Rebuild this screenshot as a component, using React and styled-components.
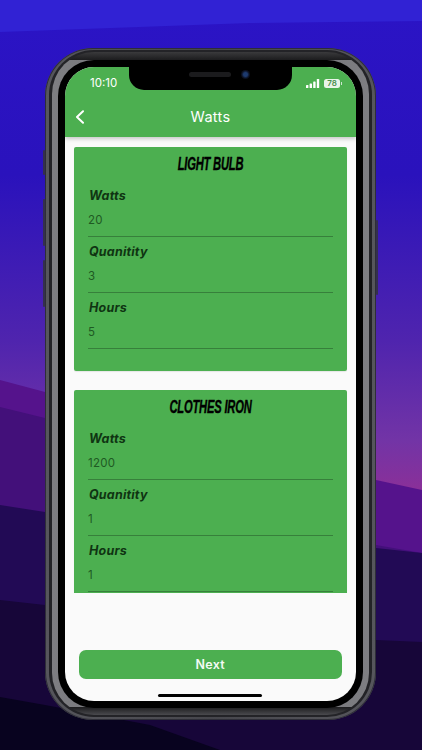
import React from "react";
import styled, { createGlobalStyle } from "styled-components";

const Global = createGlobalStyle`
  html, body { margin: 0; padding: 0; }
  body { font-family: Inter, "Liberation Sans", sans-serif; background: #140536; }
`;

const Page = styled.div`
  position: relative;
  width: 422px;
  height: 750px;
  overflow: hidden;
  padding-top: 48px;
  box-sizing: border-box;
`;

const Backdrop = styled.svg`
  position: absolute;
  inset: 0;
  width: 422px;
  height: 750px;
`;

const Shell = styled.div`
  position: relative;
  width: 331px;
  height: 672px;
  margin-left: 45px;
  box-sizing: border-box;
  padding: 2px 4px 3px;
  border-radius: 48px;
  background: linear-gradient(90deg, #56565c, #46464c 50%, #56565c);
  box-shadow: inset 0 0 0 1px #2e2e38;
`;

const DarkRing = styled.div`
  height: 100%;
  box-sizing: border-box;
  padding: 2px 3px;
  border-radius: 45px;
  background: #232327;
`;

const MetalRing = styled.div`
  height: 100%;
  box-sizing: border-box;
  padding: 8px 6px 7px;
  border-radius: 42px;
  background:
    linear-gradient(180deg, #3a3a3c 0, #1c1c1e 8px, transparent 8px, transparent calc(100% - 8px), #1c1c1e calc(100% - 8px), #4a4a4e 100%),
    linear-gradient(90deg, #7e7e82, #6a6a6e 50%, #7e7e82);
`;

const Bezel = styled.div`
  height: 100%;
  box-sizing: border-box;
  padding: 7px;
  border-radius: 36px;
  background: #000;
`;

const Screen = styled.div`
  position: relative;
  height: 100%;
  display: flex;
  flex-direction: column;
  overflow: hidden;
  border-radius: 29px;
  background: #fafafa;
`;

const SideKey = styled.div`
  position: absolute;
  top: ${(p) => p.$top}px;
  height: ${(p) => p.$h}px;
  width: 2px;
  ${(p) => (p.$right ? "right: -2px;" : "left: -2px;")}
  border-radius: 1px;
  background: #34304e;
`;

const Notch = styled.div`
  position: absolute;
  z-index: 2;
  top: 0;
  left: 64px;
  width: 163px;
  height: 23px;
  border-radius: 0 0 15px 15px;
  background: #000;
`;

const Speaker = styled.div`
  position: absolute;
  top: 5px;
  left: 60px;
  width: 42px;
  height: 5px;
  border-radius: 3px;
  background: #1b1b1d;
`;

const Camera = styled.div`
  position: absolute;
  top: 3px;
  left: 112px;
  width: 9px;
  height: 9px;
  border-radius: 50%;
  background: radial-gradient(circle, #1d3a6e 0 30%, #0b0f1e 60%);
`;

const Header = styled.header`
  position: relative;
  z-index: 1;
  flex: none;
  height: 70px;
  background: #4caf50;
  box-shadow: 0 2px 4px rgba(0, 0, 0, 0.2);
`;

const StatusBar = styled.div`
  height: 23px;
  display: flex;
  align-items: flex-end;
  justify-content: space-between;
  padding: 0 16px 0 25px;
  color: #fff;
`;

const Clock = styled.span`
  font-size: 11.5px;
  line-height: 15px;
  margin-bottom: -1px;
`;

const StatusIcons = styled.div`
  display: flex;
  align-items: center;
  gap: 4px;
  height: 11px;
  margin-bottom: 1px;
`;

const Battery = styled.span`
  position: relative;
  width: 16px;
  height: 9px;
  border-radius: 2.5px;
  background: #e9f4ea;
  color: #4a8f4e;
  font-size: 8px;
  font-weight: 600;
  line-height: 9px;
  text-align: center;
  &::after {
    content: "";
    position: absolute;
    right: -2px;
    top: 3px;
    width: 1px;
    height: 3px;
    background: #cfe6d0;
  }
`;

const NavBar = styled.div`
  height: 47px;
  box-sizing: border-box;
  padding-top: 7px;
  display: flex;
  align-items: center;
  justify-content: center;
  position: relative;
`;

const BackIcon = styled.svg`
  position: absolute;
  left: 10px;
  top: 20px;
`;

const Title = styled.h1`
  margin: 0;
  color: #fff;
  font-size: 14.5px;
  font-weight: 400;
  line-height: 20px;
  letter-spacing: 0.3px;
`;

const List = styled.div`
  flex: none;
  height: 456px;
  overflow: hidden;
  box-sizing: border-box;
  padding: 10px 9px 0;
  display: flex;
  flex-direction: column;
  gap: 19px;
`;

const Card = styled.section`
  flex: none;
  box-sizing: border-box;
  padding: 0 14px 22px;
  border-radius: 2px;
  background: #4caf50;
  box-shadow: 0 1px 1px rgba(0, 0, 0, 0.08);
`;

const CardTitle = styled.h2`
  margin: 0;
  height: 34px;
  display: flex;
  align-items: center;
  justify-content: center;
  color: #000;
  font-family: "Liberation Sans", sans-serif;
  font-size: 18px;
  font-style: italic;
  font-weight: 700;
  text-transform: uppercase;
  transform: scaleX(0.62);
  -webkit-text-stroke: 0.4px #000;
  white-space: nowrap;
  letter-spacing: -0.3px;
`;

const Field = styled.div`
  height: 56px;
  box-sizing: border-box;
  padding-top: 7px;
  border-bottom: 1px solid #37803b;
`;

const Label = styled.div`
  margin-left: 1px;
  color: #0f3412;
  font-size: 12.5px;
  font-style: italic;
  font-weight: 700;
  line-height: 16px;
  letter-spacing: 0.2px;
`;

const Value = styled.div`
  margin-top: 9px;
  color: #1f5a23;
  font-size: 11.5px;
  line-height: 14px;
  letter-spacing: 0.3px;
`;

const Footer = styled.div`
  flex: 1;
  position: relative;
  padding: 57px 14px 0 13.5px;
`;

const NextButton = styled.button`
  display: block;
  width: 100%;
  height: 29px;
  border: 0;
  border-radius: 7px;
  background: #4caf50;
  color: #f4faf4;
  font-family: inherit;
  font-size: 12.5px;
  font-weight: 600;
  letter-spacing: 0.3px;
`;

const HomeBar = styled.div`
  position: absolute;
  left: 93px;
  bottom: 4px;
  width: 104px;
  height: 3px;
  border-radius: 2px;
  background: #000;
`;

const cards = [
  { name: "Light Bulb", values: ["20", "3", "5"] },
  { name: "Clothes Iron", values: ["1200", "1", "1"] },
];
const labels = ["Watts", "Quanitity", "Hours"];

export default function App() {
  return (
    <Page>
      <Global />
      <Backdrop viewBox="0 0 422 750">
        <defs>
          <linearGradient id="sky" x1="0" y1="0" x2="0" y2="1">
            <stop offset="0" stopColor="#2b14c6" />
            <stop offset="0.35" stopColor="#2a12bc" />
            <stop offset="0.68" stopColor="#4f24ae" />
            <stop offset="0.88" stopColor="#7234a6" />
            <stop offset="1" stopColor="#8f2f96" />
          </linearGradient>
        </defs>
        <rect width="422" height="500" fill="url(#sky)" />
        <polygon points="0,0 422,0 422,21 250,23 0,32" fill="#3122d4" />
        <polygon points="0,380 45,392 376,480 422,490 422,750 0,750" fill="#55138c" />
        <polygon points="0,407 45,418 376,545 422,553 422,750 0,750" fill="#43107a" />
        <polygon points="0,505 45,512 376,548 422,553 422,750 0,750" fill="#220a55" />
        <polygon points="0,600 45,605 376,640 422,642 422,750 0,750" fill="#170639" />
        <polygon points="0,697 45,705 150,725 220,750 0,750" fill="#08031f" />
      </Backdrop>
      <Shell>
        <SideKey $top={102} $h={25} />
        <SideKey $top={151} $h={47} />
        <SideKey $top={212} $h={47} />
        <SideKey $right $top={172} $h={75} />
        <DarkRing>
          <MetalRing>
            <Bezel>
              <Screen>
                <Header>
                  <StatusBar>
                    <Clock>10:10</Clock>
                    <StatusIcons>
                      <svg width="14" height="9" viewBox="0 0 14 9" fill="#fff">
                        <rect x="0" y="6" width="2.4" height="3" rx="0.6" />
                        <rect x="3.6" y="4.4" width="2.4" height="4.6" rx="0.6" />
                        <rect x="7.2" y="2.4" width="2.4" height="6.6" rx="0.6" />
                        <rect x="10.8" y="0" width="2.4" height="9" rx="0.6" />
                      </svg>
                      <Battery>78</Battery>
                    </StatusIcons>
                  </StatusBar>
                  <NavBar>
                    <BackIcon width="10" height="14" viewBox="0 0 10 14" fill="none">
                      <path d="M8 1.2 L2 7 L8 12.8" stroke="#fff" strokeWidth="2" strokeLinecap="round" strokeLinejoin="round" />
                    </BackIcon>
                    <Title>Watts</Title>
                  </NavBar>
                </Header>
                <List>
                  {cards.map((card) => (
                    <Card key={card.name}>
                      <CardTitle>{card.name}</CardTitle>
                      {labels.map((label, i) => (
                        <Field key={label}>
                          <Label>{label}</Label>
                          <Value>{card.values[i]}</Value>
                        </Field>
                      ))}
                    </Card>
                  ))}
                </List>
                <Footer>
                  <NextButton>Next</NextButton>
                  <HomeBar />
                </Footer>
                <Notch>
                  <Speaker />
                  <Camera />
                </Notch>
              </Screen>
            </Bezel>
          </MetalRing>
        </DarkRing>
      </Shell>
    </Page>
  );
}
